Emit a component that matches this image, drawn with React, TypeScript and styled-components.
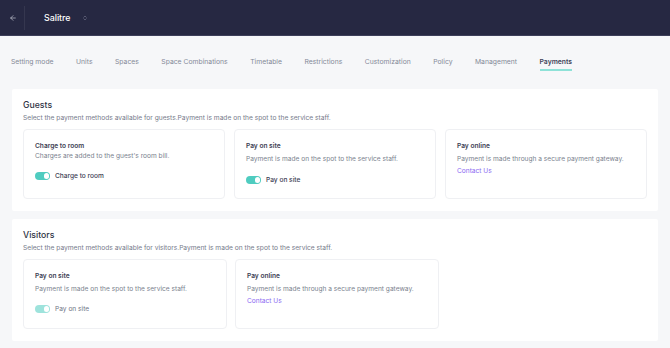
import React from "react";
import styled, { createGlobalStyle } from "styled-components";
import { ArrowLeft, ChevronsUpDown } from "lucide-react";

const Global = createGlobalStyle`
  html, body { margin: 0; padding: 0; background: #f6f7f9; }
  body { font-family: Inter, "Noto Sans", sans-serif; -webkit-font-smoothing: antialiased; }
  * { box-sizing: border-box; }
`;

const Page = styled.div`
  width: 670px;
  min-height: 348px;
  background: #f6f7f9;
`;

const Header = styled.header`
  height: 36px;
  background: #262842;
  border-bottom: 1px solid #3d3f5a;
  display: flex;
  align-items: center;
`;

const BackButton = styled.button`
  width: 25px;
  height: 24px;
  display: flex;
  align-items: center;
  justify-content: center;
  background: none;
  border: none;
  border-right: 1px solid #35374f;
  padding: 0 0 0 1px;
  color: #c9cbd6;
`;

const Brand = styled.div`
  display: flex;
  align-items: center;
  gap: 11px;
  margin-left: 19px;
  color: #ffffff;
  font-size: 8.8px;
  font-weight: 500;
`;

const Tabs = styled.nav`
  display: flex;
  gap: 22.5px;
  padding: 21px 11px 0;
  height: 53px;
`;

const Tab = styled.div<{ $active?: boolean }>`
  font-size: 6.8px;
  line-height: 10px;
  color: ${(p) => (p.$active ? "#3f4459" : "#858a98")};
  font-weight: ${(p) => (p.$active ? 600 : 400)};
  padding-bottom: 2px;
  height: 14px;
  border-bottom: 2px solid ${(p) => (p.$active ? "#8ee2d8" : "transparent")};
`;

const Sections = styled.div`
  display: flex;
  flex-direction: column;
  gap: 8px;
  padding: 0 12px;
`;

const Section = styled.section`
  background: #ffffff;
  border-radius: 2px;
  padding: 11px 11px 12px;
  height: 122px;
`;

const SectionTitle = styled.h2`
  margin: 0;
  font-size: 8.7px;
  line-height: 11px;
  font-weight: 500;
  color: #2e3244;
`;

const SectionSub = styled.p`
  margin: 2px 0 0;
  font-size: 6.65px;
  line-height: 10px;
  color: #767b8b;
`;

const Grid = styled.div<{ $cols: string; $gap: number }>`
  display: grid;
  grid-template-columns: ${(p) => p.$cols};
  gap: ${(p) => p.$gap}px;
  margin-top: 6px;
`;

const MethodCard = styled.div`
  height: 70px;
  border: 1px solid #eff0f3;
  border-radius: 4px;
  padding: 11px 11px 0;
`;

const MethodTitle = styled.div`
  font-size: 6.6px;
  line-height: 10px;
  font-weight: 600;
  color: #3d4154;
`;

const MethodDesc = styled.div<{ $tight?: boolean }>`
  margin-top: ${(p) => (p.$tight ? 0 : 3)}px;
  font-size: 6.6px;
  line-height: 10px;
  color: #7a7f8e;
`;

const ToggleRow = styled.div<{ $top: number }>`
  display: flex;
  align-items: center;
  gap: 5px;
  margin-top: ${(p) => p.$top}px;
`;

const Toggle = styled.span<{ $muted?: boolean }>`
  position: relative;
  width: 15px;
  height: 7.5px;
  border-radius: 4px;
  background: ${(p) => (p.$muted ? "#9ee3dc" : "#4fccc0")};
  &::after {
    content: "";
    position: absolute;
    right: 1px;
    top: 1px;
    width: 5.5px;
    height: 5.5px;
    border-radius: 50%;
    background: #ffffff;
  }
`;

const ToggleLabel = styled.span<{ $muted?: boolean }>`
  font-size: 6.6px;
  font-weight: ${(p) => (p.$muted ? 400 : 500)};
  color: ${(p) => (p.$muted ? "#6f7485" : "#3d4154")};
`;

const Link = styled.a`
  display: block;
  margin-top: 2px;
  font-size: 6.6px;
  line-height: 10px;
  color: #8a68f2;
  text-decoration: none;
`;

const tabs = [
  "Setting mode",
  "Units",
  "Spaces",
  "Space Combinations",
  "Timetable",
  "Restrictions",
  "Customization",
  "Policy",
  "Management",
  "Payments",
];

export default function App() {
  return (
    <Page>
      <Global />
      <Header>
        <BackButton aria-label="Back">
          <ArrowLeft size={8} strokeWidth={2} />
        </BackButton>
        <Brand>
          Salitre
          <ChevronsUpDown size={6} color="#8a8ca3" strokeWidth={2} />
        </Brand>
      </Header>
      <Tabs>
        {tabs.map((t) => (
          <Tab key={t} $active={t === "Payments"}>
            {t}
          </Tab>
        ))}
      </Tabs>
      <Sections>
        <Section>
          <SectionTitle>Guests</SectionTitle>
          <SectionSub>
            Select the payment methods available for guests.Payment is made on the spot to the service staff.
          </SectionSub>
          <Grid $cols="repeat(3, 1fr)" $gap={9}>
            <MethodCard>
              <MethodTitle>Charge to room</MethodTitle>
              <MethodDesc $tight>Charges are added to the guest's room bill.</MethodDesc>
              <ToggleRow $top={11}>
                <Toggle />
                <ToggleLabel>Charge to room</ToggleLabel>
              </ToggleRow>
            </MethodCard>
            <MethodCard>
              <MethodTitle>Pay on site</MethodTitle>
              <MethodDesc>Payment is made on the spot to the service staff.</MethodDesc>
              <ToggleRow $top={12}>
                <Toggle />
                <ToggleLabel>Pay on site</ToggleLabel>
              </ToggleRow>
            </MethodCard>
            <MethodCard>
              <MethodTitle>Pay online</MethodTitle>
              <MethodDesc>Payment is made through a secure payment gateway.</MethodDesc>
              <Link href="#">Contact Us</Link>
            </MethodCard>
          </Grid>
        </Section>
        <Section>
          <SectionTitle>Visitors</SectionTitle>
          <SectionSub>
            Select the payment methods available for visitors.Payment is made on the spot to the service staff.
          </SectionSub>
          <Grid $cols="204px 204px" $gap={8}>
            <MethodCard>
              <MethodTitle>Pay on site</MethodTitle>
              <MethodDesc>Payment is made on the spot to the service staff.</MethodDesc>
              <ToggleRow $top={11}>
                <Toggle $muted />
                <ToggleLabel $muted>Pay on site</ToggleLabel>
              </ToggleRow>
            </MethodCard>
            <MethodCard>
              <MethodTitle>Pay online</MethodTitle>
              <MethodDesc>Payment is made through a secure payment gateway.</MethodDesc>
              <Link href="#">Contact Us</Link>
            </MethodCard>
          </Grid>
        </Section>
      </Sections>
    </Page>
  );
}
